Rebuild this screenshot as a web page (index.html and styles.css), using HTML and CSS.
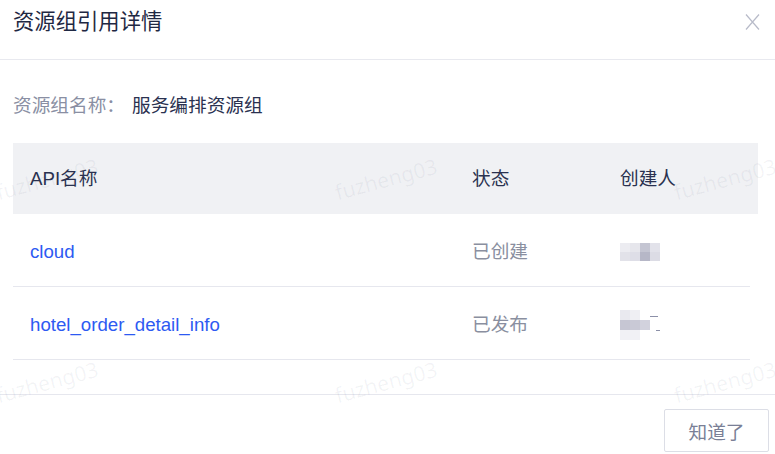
FILE: index.html
```html
<!DOCTYPE html>
<html lang="zh-CN">
<head>
<meta charset="utf-8">
<title>资源组引用详情</title>
<link rel="stylesheet" href="styles.css">
</head>
<body>
<div class="dialog">
  <div class="dialog-header">
    <div class="dialog-title">资源组引用详情</div>
    <svg class="close" width="15" height="16" viewBox="0 0 15 16"><path d="M1 0.5 L14 15.5 M14 0.5 L1 15.5" stroke="#b8bbc9" stroke-width="1.2" fill="none"/></svg>
  </div>
  <div class="dialog-body">
    <div class="info"><span class="info-label">资源组名称：</span><span class="info-value">服务编排资源组</span></div>
    <div class="table">
      <div class="thead">
        <div class="cell c1">API名称</div>
        <div class="cell c2">状态</div>
        <div class="cell c3">创建人</div>
      </div>
      <div class="trow">
        <div class="cell c1"><a class="link">cloud</a></div>
        <div class="cell c2 status">已创建</div>
        <div class="cell c3">
          <div class="blur b1">
            <i class="p1"></i><i class="p2"></i><i class="p3"></i><i class="p4"></i>
            <i class="p5"></i><i class="p6"></i><i class="p7"></i><i class="p8"></i>
          </div>
        </div>
      </div>
      <div class="trow">
        <div class="cell c1"><a class="link">hotel_order_detail_info</a></div>
        <div class="cell c2 status">已发布</div>
        <div class="cell c3">
          <div class="blur b2">
            <i class="q1"></i><i class="q2"></i><i class="q0"></i><i class="q0"></i>
            <i class="q3"></i><i class="q4"></i><i class="q5"></i><i class="q0"></i>
            <i class="q6"></i><i class="q6"></i><i class="q0"></i><i class="q0"></i>
            <span class="frag f1"></span><span class="frag f2"></span>
          </div>
        </div>
      </div>
    </div>
  </div>
  <div class="dialog-footer">
    <button class="btn">知道了</button>
  </div>
</div>
<div class="watermarks">
  <span class="wm w1">fuzheng03</span>
  <span class="wm w2">fuzheng03</span>
  <span class="wm w3">fuzheng03</span>
  <span class="wm w4">fuzheng03</span>
  <span class="wm w5">fuzheng03</span>
  <span class="wm w6">fuzheng03</span>
</div>
</body>
</html>
```
FILE: styles.css
```css
* { box-sizing: border-box; }
html, body {
  margin: 0;
  padding: 0;
  width: 775px;
  height: 454px;
  overflow: hidden;
  background: #fff;
  font-family: "Liberation Sans", "Noto Sans CJK SC", sans-serif;
  font-size: 18.67px;
  color: #2a3150;
  position: relative;
}
.dialog { width: 775px; }
.dialog-header {
  height: 60px;
  padding: 0 15px 16px 13px;
  display: flex;
  align-items: center;
  justify-content: space-between;
  border-bottom: 1px solid #e8e9ef;
}
.dialog-title {
  font-size: 21.33px;
  line-height: 44px;
  color: #1f2843;
}
.close { display: block; }
.dialog-body { padding: 32px 0 0 13px; height: 334px; }
.info { height: 28px; line-height: 28px; display: flex; }
.info-label { color: #8a8fa3; width: 119px; }
.info-value { color: #2a3150; }
.table { margin-top: 23px; }
.thead {
  display: flex;
  width: 745px;
  height: 71px;
  align-items: center;
  background: #f0f1f4;
  color: #2a3150;
}
.trow {
  display: flex;
  width: 737px;
  height: 73px;
  padding-top: 4px;
  align-items: center;
  border-bottom: 1px solid #e6e7ee;
}
.trow:first-of-type { height: 74px; }
.cell { padding-left: 17px; line-height: 28px; height: 28px; display: flex; align-items: center; }
.c1 { width: 442px; }
.c2 { width: 148px; }
.c3 { flex: 1; }
.link { color: #2d5af2; text-decoration: none; }
.status { color: #8a8fa0; }
.blur { display: grid; position: relative; }
.b1 { grid-template-columns: repeat(4, 10px); grid-auto-rows: 9px; margin-top: 0; }
.b1 i { display: block; }
.p1 { background: #ececf1; } .p2 { background: #e6e6ec; } .p3 { background: #c4c5d2; } .p4 { background: #e2e2ea; }
.p5 { background: #e2e2e9; } .p6 { background: #dedee7; } .p7 { background: #b6b7c7; } .p8 { background: #dcdce5; }
.b2 { grid-template-columns: repeat(4, 10px); grid-auto-rows: 10px; margin-top: 0; }
.b2 i { display: block; }
.q0 { background: transparent; }
.q1 { background: #e9e9ef; } .q2 { background: #efeff3; }
.q3 { background: #c6c6d3; } .q4 { background: #c9c9d6; } .q5 { background: #d2d2dd; }
.q6 { background: #f1f1f5; }
.frag { position: absolute; height: 1px; background: #8c90a8; }
.f1 { left: 30px; top: 6px; width: 8px; }
.f2 { left: 36px; top: 20px; width: 4px; }
.dialog-footer {
  border-top: 1px solid #e6e7ee;
  display: flex;
  justify-content: flex-end;
  padding: 14px 6px 0 0;
}
.btn {
  width: 105px;
  height: 43px;
  border: 1px solid #dcdee6;
  border-radius: 2px;
  background: #fff;
  color: #7a7f96;
  font-family: "Liberation Sans", "Noto Sans CJK SC", sans-serif;
  font-size: 18.67px;
  padding: 0;
}
.watermarks { position: absolute; inset: 0; pointer-events: none; }
.wm {
  position: absolute;
  width: 110px;
  margin-left: -55px;
  margin-top: -14px;
  text-align: center;
  font-family: "Noto Sans", sans-serif;
  font-size: 21px;
  line-height: 28px;
  color: rgba(60, 70, 100, 0.06);
  transform: rotate(-15deg);
  white-space: nowrap;
}
.w1 { left: 47px; top: 179px; }
.w2 { left: 386px; top: 179px; }
.w3 { left: 725px; top: 179px; }
.w4 { left: 47px; top: 382px; }
.w5 { left: 386px; top: 382px; }
.w6 { left: 725px; top: 382px; }
```
